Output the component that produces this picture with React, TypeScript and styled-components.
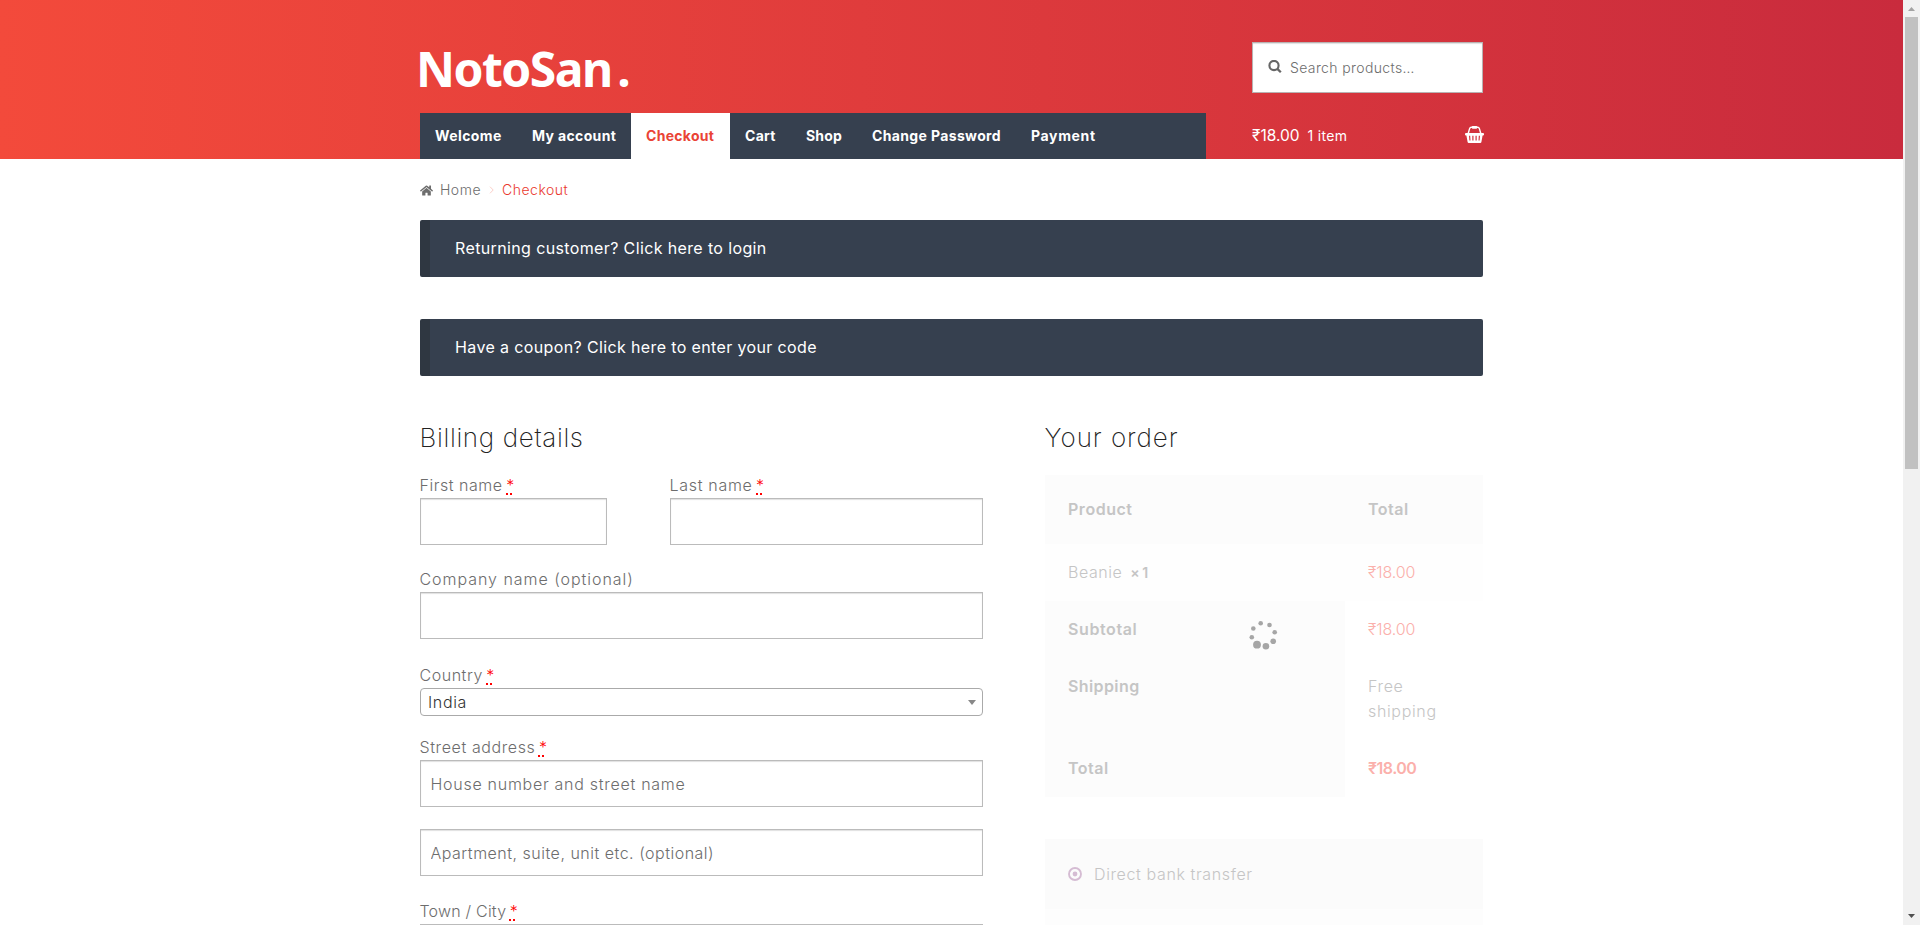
import React from "react";
import styled, { createGlobalStyle } from "styled-components";
import { FaHome } from "react-icons/fa";

const GlobalStyle = createGlobalStyle`
  * { box-sizing: border-box; }
  body {
    margin: 0;
    background: #fff;
    color: #6d6d6d;
    font: 300 16px/26px Inter, "Noto Sans", sans-serif;
    letter-spacing: 0.53px;
    overflow: hidden;
  }
`;

const Window = styled.div`
  display: flex;
  height: 925px;
  overflow: hidden;
`;

const Page = styled.div`
  flex: 1;
  min-width: 0;
  height: 925px;
  overflow: hidden;
`;

const Container = styled.div`
  width: 1063px;
  margin-left: 420px;
`;

/* Header */
const Header = styled.header`
  height: 159px;
  background: linear-gradient(to right, #f34a3b, #c92b3d);
`;

const HeaderGrid = styled(Container)`
  display: grid;
  grid-template-columns: 786px 231px;
  grid-template-rows: 113px 46px;
  column-gap: 46px;
`;

const Logo = styled.div`
  margin-left: -4px;
  padding-top: 39px;
  color: #fff;
  font: 700 48px/60px "Noto Sans", sans-serif;
  letter-spacing: -1.5px;
`;

const LogoDot = styled.span`
  margin-left: 5.5px;
`;

const SearchBox = styled.div`
  display: flex;
  align-items: center;
  height: 51px;
  margin-top: 42px;
  padding-left: 15px;
  border: 1px solid #b9b2b2;
  background: #fff;
  box-shadow: inset 0 1px 1px rgba(0, 0, 0, 0.125);
  font-size: 14px;
  letter-spacing: 0.38px;

  svg {
    margin: -2px 8px 0 0;
  }
`;

const Nav = styled.nav`
  display: flex;
  background: #36404f;
`;

const NavItem = styled.a<{ $width: number; $active?: boolean; $spacing?: number }>`
  width: ${(p) => p.$width}px;
  padding-left: 15px;
  background: ${(p) => (p.$active ? "#fff" : "transparent")};
  color: ${(p) => (p.$active ? "#ea4335" : "#fff")};
  font-size: 14px;
  font-weight: 700;
  line-height: 46px;
  letter-spacing: ${(p) => p.$spacing ?? 0.3}px;
  white-space: nowrap;
`;

const CartSummary = styled.div`
  display: flex;
  align-items: center;
  padding-bottom: 1px;
  color: #fff;
  font-size: 14px;
  font-weight: 400;
  letter-spacing: 0.3px;

  svg {
    margin: -2px -1px 0 auto;
  }
`;

const CartTotal = styled.span`
  margin-right: 8px;
  font-size: 15.5px;
  letter-spacing: 0;
`;

/* Breadcrumb and notices */
const Breadcrumb = styled.div`
  display: flex;
  align-items: center;
  height: 26px;
  margin: 18px 0 17px;
  font-size: 14px;
  letter-spacing: 0.5px;
`;

const HomeLink = styled.span`
  margin: 0 8px 0 7px;
`;

const CurrentCrumb = styled.span`
  margin-left: 8px;
  color: #ea3a2e;
`;

const Notice = styled.div`
  height: 57px;
  margin-bottom: 42px;
  padding-left: 25px;
  border-left: 10px solid #2f3741;
  border-radius: 2px;
  background: #36404f;
  color: #fff;
  font-weight: 400;
  line-height: 57px;
  letter-spacing: 0.37px;
`;

/* Checkout columns */
const Columns = styled.div`
  display: grid;
  grid-template-columns: 563px 438px;
  column-gap: 62px;
  margin-top: 46px;
`;

const Heading = styled.h3<{ $spacing?: number }>`
  margin: 0 0 0 -0.5px;
  color: #222;
  font-size: 26px;
  font-weight: 200;
  line-height: 32px;
  letter-spacing: ${(p) => p.$spacing ?? 0.65}px;
`;

const Form = styled.div`
  margin-top: 18px;
`;

const NameRow = styled.div`
  display: flex;
  justify-content: space-between;
`;

const Field = styled.div<{ $width?: number; $gap?: number }>`
  width: ${(p) => (p.$width ? `${p.$width}px` : "100%")};
  margin-top: ${(p) => p.$gap ?? 0}px;
`;

const Label = styled.label<{ $spacing?: number }>`
  display: block;
  margin-left: -0.5px;
  letter-spacing: ${(p) => p.$spacing ?? 0.53}px;
  white-space: nowrap;
`;

const Required = styled.abbr`
  margin-left: 3.5px;
  color: #f00;
  letter-spacing: 0;
  text-decoration: underline dotted 2px;
  text-underline-offset: 2px;
`;

const Input = styled.input`
  display: block;
  width: 100%;
  height: 47px;
  padding: 0 9.5px;
  border: 1px solid #bbb;
  border-radius: 0;
  background: #fff;
  box-shadow: inset 0 1px 1px rgba(0, 0, 0, 0.125);
  color: #43454b;
  font: inherit;
  letter-spacing: 0.72px;
  outline: none;

  &::placeholder {
    color: #6d6d6d;
    opacity: 1;
  }
`;

const AddressLine = styled(Input)`
  letter-spacing: 0.5px;
`;

const Select = styled.div`
  display: flex;
  align-items: center;
  justify-content: space-between;
  height: 28px;
  padding: 0 6px 0 7px;
  border: 1px solid #aaa;
  border-radius: 4px;
  color: #333;
  letter-spacing: 0.65px;
`;

const Caret = styled.span`
  border: solid transparent;
  border-width: 5px 4px 0;
  border-top-color: #888;
`;

/* Order review */
const Review = styled.div`
  position: relative;
  margin-top: 21px;
`;

const OrderTable = styled.div`
  display: grid;
  grid-template-columns: 300px 138px;
  grid-template-rows: 69px 57px 57px 82px 57px;
  color: #c5c5c5;
`;

const Cell = styled.div<{ $shade?: string; $bold?: boolean; $price?: boolean; $head?: boolean; $spacing?: number }>`
  padding: ${(p) => (p.$head ? 21.5 : 15.5)}px 23px 0;
  background: ${(p) => p.$shade ?? "transparent"};
  color: ${(p) => (p.$price ? "#fbb0ab" : "inherit")};
  font-weight: ${(p) => (p.$bold ? 600 : 300)};
  letter-spacing: ${(p) => p.$spacing ?? 0.53}px;
  line-height: 25.5px;
`;

const Quantity = styled.strong`
  margin-left: 8px;
  font-size: 14px;
  font-weight: 600;
  letter-spacing: -0.4px;
`;

const Spinner = styled.svg`
  position: absolute;
  left: 203px;
  top: 145px;
`;

const PaymentMethods = styled.div`
  height: 100px;
  margin-top: 42px;
  background: #fdfdfd;
`;

const PaymentMethod = styled.div`
  display: flex;
  align-items: center;
  gap: 12.5px;
  height: 70px;
  padding-left: 22.5px;
  background: #fbfbfb;
  color: #c5c5c5;
  letter-spacing: 0.62px;
`;

/* Page scrollbar */
const ScrollTrack = styled.div`
  display: flex;
  flex-direction: column;
  align-items: center;
  width: 17px;
  background: #f1f1f1;
`;

const ScrollArrow = styled.svg`
  display: block;
  flex: none;
`;

const ScrollThumb = styled.div`
  width: 13px;
  height: 452px;
  margin-bottom: auto;
  background: #c1c1c1;
`;

const SearchIcon = () => (
  <svg width="14" height="14" viewBox="0 0 14 14" fill="none" stroke="#666" strokeWidth="2.1">
    <circle cx="6" cy="5.5" r="4.6" />
    <path d="M9.4 8.9l3.4 3.4" strokeWidth="2.3" />
  </svg>
);

const BasketIcon = () => (
  <svg width="19" height="17" viewBox="0 0 19 17">
    <path d="M3.2 7.5L4.6 2.6Q5 1.3 6.4 1.3H12.6Q14 1.3 14.4 2.6L15.8 7.5" fill="none" stroke="#fff" strokeWidth="1.4" />
    <rect x="6.8" y="0" width="5.4" height="2.8" rx="1" fill="#fff" />
    <path
      fill="#fff"
      fillRule="evenodd"
      d="M1 6.9h17a1 1 0 0 1 1 1v.6a1 1 0 0 1-1 1h-.4l-1.2 6.5a1.2 1.2 0 0 1-1.2 1H3.8a1.2 1.2 0 0 1-1.2-1L1.4 9.5H1a1 1 0 0 1-1-1v-.6a1 1 0 0 1 1-1zM4 9.8l.4 4.6h1.1l-.3-4.6zM7.3 9.8v4.6h1.2V9.8zM10.5 9.8v4.6h1.2V9.8zM13.800 9.8l-.3 4.6h1.1l.4-4.6z"
    />
  </svg>
);

const RadioIcon = () => (
  <svg width="14" height="14" viewBox="0 0 14 14">
    <circle cx="7" cy="7" r="6" fill="none" stroke="#d5bcd3" strokeWidth="1.9" />
    <circle cx="7" cy="7" r="2.4" fill="#d5bcd3" />
  </svg>
);

const navItems = [
  { label: "Welcome", width: 97, spacing: 0.4 },
  { label: "My account", width: 114, spacing: 0.35 },
  { label: "Checkout", width: 99, active: true },
  { label: "Cart", width: 61 },
  { label: "Shop", width: 66, spacing: 0.2 },
  { label: "Change Password", width: 159, spacing: 0.36 },
  { label: "Payment", width: 95, spacing: 0.65 },
];

const spinnerDots: [number, number, number][] = [
  [12.7, 3.3, 2.3],
  [21.5, 5, 2.3],
  [26.7, 12.3, 2.3],
  [25.2, 21.2, 2.8],
  [17.9, 26.3, 3.3],
  [9, 24.7, 3.9],
  [3.8, 17.3, 2.3],
  [5.3, 8.5, 2.3],
];

export default function App() {
  return (
    <Window>
      <GlobalStyle />
      <Page>
        <Header>
          <HeaderGrid>
            <Logo>
              NotoSan<LogoDot>.</LogoDot>
            </Logo>
            <SearchBox>
              <SearchIcon />
              Search products…
            </SearchBox>
            <Nav>
              {navItems.map((item) => (
                <NavItem key={item.label} $width={item.width} $active={item.active} $spacing={item.spacing}>
                  {item.label}
                </NavItem>
              ))}
            </Nav>
            <CartSummary>
              <CartTotal>₹18.00</CartTotal>1 item
              <BasketIcon />
            </CartSummary>
          </HeaderGrid>
        </Header>

        <Container>
          <Breadcrumb>
            <FaHome size={13} />
            <HomeLink>Home</HomeLink>
            <svg width="5" height="8" viewBox="0 0 5 8" fill="none" stroke="#fbcfc8">
              <path d="M1 .7L4.2 4 1 7.3" />
            </svg>
            <CurrentCrumb>Checkout</CurrentCrumb>
          </Breadcrumb>

          <Notice>Returning customer? Click here to login</Notice>
          <Notice>Have a coupon? Click here to enter your code</Notice>

          <Columns>
            <section>
              <Heading>Billing details</Heading>
              <Form>
                <NameRow>
                  <Field $width={187}>
                    <Label>First name<Required>*</Required></Label>
                    <Input />
                  </Field>
                  <Field $width={313}>
                    <Label $spacing={0.69}>Last name<Required>*</Required></Label>
                    <Input />
                  </Field>
                </NameRow>
                <Field $gap={21}>
                  <Label $spacing={0.96}>Company name (optional)</Label>
                  <Input />
                </Field>
                <Field $gap={23}>
                  <Label>Country<Required>*</Required></Label>
                  <Select>
                    India
                    <Caret />
                  </Select>
                </Field>
                <Field $gap={18}>
                  <Label $spacing={0.6}>Street address<Required>*</Required></Label>
                  <Input placeholder="House number and street name" />
                </Field>
                <Field $gap={22}>
                  <AddressLine placeholder="Apartment, suite, unit etc. (optional)" />
                </Field>
                <Field $gap={22}>
                  <Label $spacing={0.2}>Town / City<Required>*</Required></Label>
                  <Input />
                </Field>
              </Form>
            </section>

            <section>
              <Heading $spacing={0.95}>Your order</Heading>
              <Review>
                <OrderTable>
                  <Cell $head $bold $shade="#fcfcfc">Product</Cell>
                  <Cell $head $bold $shade="#fcfcfc">Total</Cell>
                  <Cell $shade="#fefefe">
                    Beanie<Quantity>× 1</Quantity>
                  </Cell>
                  <Cell $price $shade="#fefefe" $spacing={-0.1}>₹18.00</Cell>
                  <Cell $bold $shade="#fcfcfc" $spacing={0.6}>Subtotal</Cell>
                  <Cell $price $spacing={-0.1}>₹18.00</Cell>
                  <Cell $bold $shade="#fcfcfc" $spacing={0.4}>Shipping</Cell>
                  <Cell $spacing={0.65}>
                    Free
                    <br />
                    shipping
                  </Cell>
                  <Cell $bold $shade="#fcfcfc">Total</Cell>
                  <Cell $bold $price $spacing={-0.5}>₹18.00</Cell>
                </OrderTable>
                <Spinner width="30" height="30" viewBox="0 0 30 30" fill="#a6a6a6">
                  {spinnerDots.map(([x, y, r]) => (
                    <circle key={`${x}-${y}`} cx={x} cy={y} r={r} />
                  ))}
                </Spinner>
                <PaymentMethods>
                  <PaymentMethod>
                    <RadioIcon />
                    Direct bank transfer
                  </PaymentMethod>
                </PaymentMethods>
              </Review>
            </section>
          </Columns>
        </Container>
      </Page>

      <ScrollTrack>
        <ScrollArrow width="17" height="17" viewBox="0 0 17 17">
          <path d="M5 11L8.5 7 12 11z" fill="#a3a3a3" />
        </ScrollArrow>
        <ScrollThumb />
        <ScrollArrow width="17" height="17" viewBox="0 0 17 17">
          <path d="M5 6L8.5 10 12 6z" fill="#505050" />
        </ScrollArrow>
      </ScrollTrack>
    </Window>
  );
}
